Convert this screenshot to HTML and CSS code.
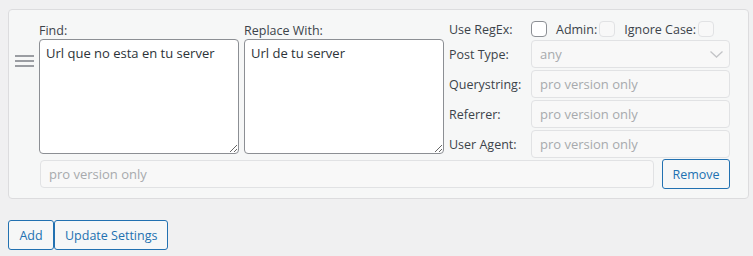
FILE: index.html
```html
<!DOCTYPE html>
<html lang="en">
  <head>
    <meta charset="utf-8" />
    <title>Redirect rules</title>
    <link rel="stylesheet" href="styles.css">
  </head>
  <body>
    <div class="wrap">
      <div class="rule">
        <span class="handle">
          <svg width="20" height="20" viewBox="0 0 20 20">
            <rect x="0" y="5" width="19" height="2" />
            <rect x="0" y="10" width="19" height="2" />
            <rect x="0" y="15" width="19" height="2" />
          </svg>
        </span>
        <div class="rule-body">
          <div class="rule-top">
            <div class="field">
              <label>Find:</label>
              <textarea>Url que no esta en tu server</textarea>
            </div>
            <div class="field">
              <label>Replace With:</label>
              <textarea>Url de tu server</textarea>
            </div>
            <div class="options">
              <div class="opt-row checks">
                <label class="opt-label">Use RegEx:</label>
                <div class="check-group">
                  <input type="checkbox" class="check check-first">
                  <span>Admin:</span>
                  <input type="checkbox" class="check" disabled>
                  <span class="check-text">Ignore Case:</span>
                  <input type="checkbox" class="check" disabled>
                </div>
              </div>
              <div class="opt-row">
                <label class="opt-label">Post Type:</label>
                <div class="select-wrap">
                  <select disabled><option>any</option></select>
                  <svg class="chevron" width="13" height="7" viewBox="0 0 13 7">
                    <path d="M0.5 0.5 L6.5 6 L12.5 0.5" />
                  </svg>
                </div>
              </div>
              <div class="opt-row">
                <label class="opt-label">Querystring:</label>
                <input type="text" class="pro" placeholder="pro version only" disabled>
              </div>
              <div class="opt-row">
                <label class="opt-label">Referrer:</label>
                <input type="text" class="pro" placeholder="pro version only" disabled>
              </div>
              <div class="opt-row">
                <label class="opt-label">User Agent:</label>
                <input type="text" class="pro" placeholder="pro version only" disabled>
              </div>
            </div>
          </div>
          <div class="rule-bottom">
            <input type="text" class="pro pro-wide" placeholder="pro version only" disabled>
            <button class="button button-remove">Remove</button>
          </div>
        </div>
      </div>
      <div class="actions">
        <button class="button button-add">Add</button>
        <button class="button">Update Settings</button>
      </div>
    </div>
  </body>
</html>
```

FILE: styles.css
```css
body {
  margin: 0;
  background-color: #f0f0f1;
  font-family: "Open Sans", sans-serif;
  font-size: 12.5px;
  color: #3c434a;
}

.wrap {
  padding: 9px 0 0 8px;
}

.rule {
  display: flex;
  width: 741px;
  box-sizing: border-box;
  background-color: #f6f7f7;
  border: 1px solid #dcdcde;
  border-radius: 4px;
  padding: 10px 18px 9px 6px;
}

.handle {
  flex: none;
  width: 20px;
  height: 20px;
  margin: 30px 4px 0 0;
}

.handle svg {
  display: block;
  fill: #9a9da2;
}

.rule-body {
  flex: 1;
  display: flex;
  flex-direction: column;
  gap: 1px;
}

.rule-top {
  display: flex;
  gap: 5px;
}

.field {
  width: 200px;
  display: flex;
  flex-direction: column;
}

.field label {
  padding-top: 3px;
  line-height: 16px;
}

textarea {
  width: 200px;
  height: 115px;
  box-sizing: border-box;
  margin: 0;
  border: 1px solid #8c8f94;
  border-radius: 4px;
  padding: 4px 6px 2px;
  background-color: #fff;
  font-family: "Open Sans", sans-serif;
  font-size: 13px;
  line-height: 1.42;
  color: #2c3338;
  resize: both;
}

.options {
  width: 281px;
  display: flex;
  flex-direction: column;
  gap: 2px;
}

.opt-row {
  display: flex;
  align-items: center;
  height: 28px;
}

.opt-row.checks {
  height: 18px;
}

.opt-label {
  width: 82px;
  flex: none;
  padding-top: 1px;
}

.check-group {
  display: flex;
  align-items: center;
}

.check {
  appearance: none;
  width: 16px;
  height: 16px;
  margin: 0 0 0 2px;
  border: 1px solid #e1e2e4;
  border-radius: 4px;
  background-color: #f8f8f8;
}

.check-first {
  margin: 0 9px 0 0;
  border-color: #8c8f94;
  background-color: #fff;
}

.check-text {
  margin-left: 9px;
}

.select-wrap {
  position: relative;
  width: 199px;
  height: 28px;
}

select {
  appearance: none;
  width: 100%;
  height: 100%;
  margin: 0;
  box-sizing: border-box;
  border: 1px solid #e1e2e4;
  border-radius: 4px;
  padding: 0 8px;
  background-color: #f8f8f8;
  font-family: "Open Sans", sans-serif;
  font-size: 13px;
  color: #a7aaad;
  opacity: 1;
}

.chevron {
  position: absolute;
  right: 7px;
  top: 11px;
  fill: none;
  stroke: #c3c4c7;
  stroke-width: 1.3;
}

.pro {
  width: 199px;
  height: 28px;
  margin: 0;
  box-sizing: border-box;
  border: 1px solid #e1e2e4;
  border-radius: 4px;
  padding: 0 8px;
  background-color: #f8f8f8;
  font-family: "Open Sans", sans-serif;
  font-size: 13px;
}

.pro::placeholder {
  color: #a7aaad;
}

.rule-bottom {
  display: flex;
  align-items: center;
  gap: 8px;
  height: 30px;
}

.pro-wide {
  flex: 1;
  width: auto;
  margin-left: 1px;
}

.button {
  height: 30px;
  margin: 0;
  padding: 0 10px;
  border: 1px solid #2271b1;
  border-radius: 3px;
  background-color: #f6f7f7;
  color: #2271b1;
  font-family: "Open Sans", sans-serif;
  font-size: 12.5px;
  cursor: pointer;
}

.button-remove {
  flex: none;
  width: 68px;
  padding: 0;
}

.button-add {
  width: 46px;
  padding: 0;
}

.actions {
  display: flex;
  margin-top: 21px;
}
```
